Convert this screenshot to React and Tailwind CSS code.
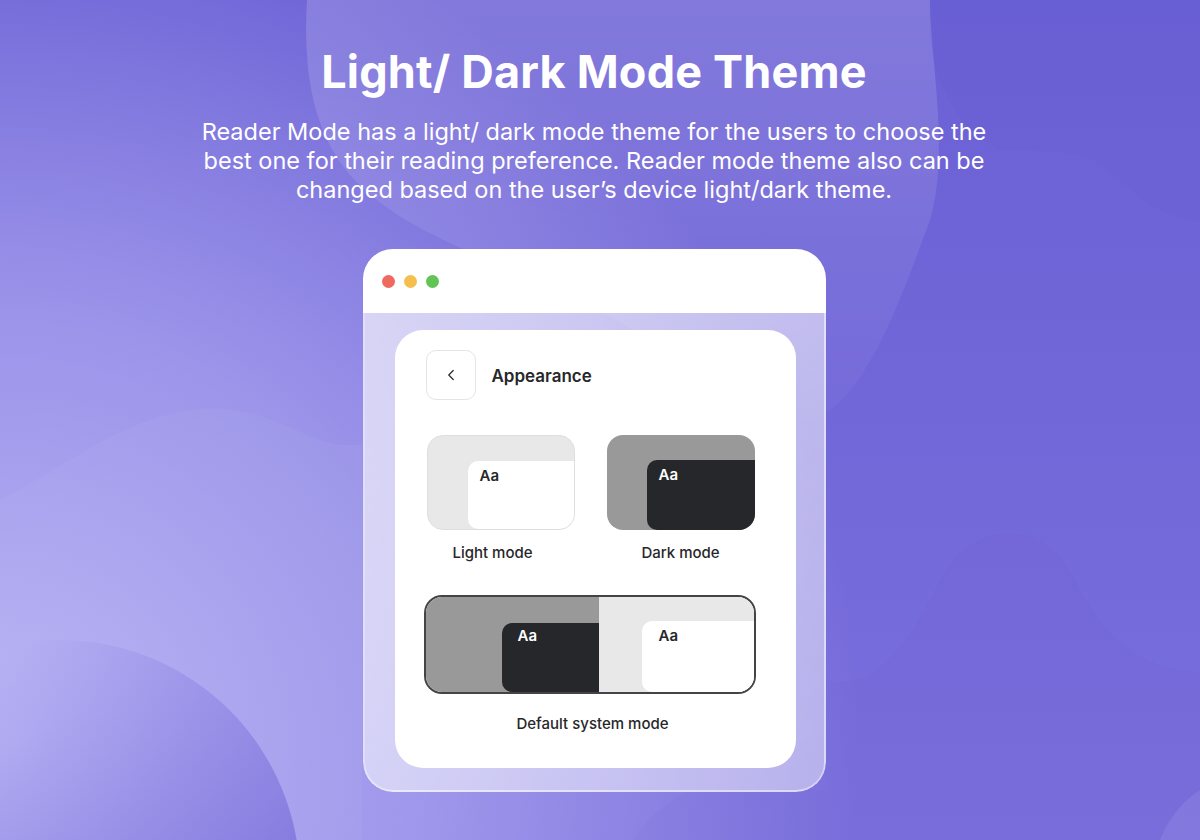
import React from "react";
import { ChevronLeft } from "lucide-react";

function Background() {
  return (
    <svg className="absolute inset-0 w-full h-full" viewBox="0 0 1200 840" preserveAspectRatio="none">
      <defs>
        <linearGradient id="base" x1="0" y1="0" x2="0" y2="1">
          <stop offset="0" stopColor="#6b60d5" />
          <stop offset="1" stopColor="#7a6fdc" />
        </linearGradient>
        <radialGradient id="glow" cx="0" cy="740" r="860" gradientUnits="userSpaceOnUse">
          <stop offset="0" stopColor="#b7b2f5" stopOpacity="1" />
          <stop offset="0.5" stopColor="#b7b2f5" stopOpacity="0.6" />
          <stop offset="1" stopColor="#b7b2f5" stopOpacity="0" />
        </radialGradient>
        <linearGradient id="topBlob" x1="0" y1="0" x2="0" y2="1">
          <stop offset="0" stopColor="#ffffff" stopOpacity="0.16" />
          <stop offset="1" stopColor="#ffffff" stopOpacity="0.02" />
        </linearGradient>
        <linearGradient id="blobBL" x1="0.25" y1="0.15" x2="0.9" y2="0.9">
          <stop offset="0" stopColor="#6f63d6" stopOpacity="0" />
          <stop offset="1" stopColor="#6f63d6" stopOpacity="1" />
        </linearGradient>
      </defs>
      <rect width="1200" height="840" fill="url(#base)" />
      <rect width="1200" height="840" fill="url(#glow)" />
      {/* top centre light blob */}
      <path
        d="M307,0 C303,70 312,130 350,175 C400,230 470,250 560,290 L800,420 C860,420 900,300 930,220 C950,150 930,60 930,0 Z"
        fill="url(#topBlob)"
      />
      {/* top right darker wave */}
      <path
        d="M930,0 C925,60 945,120 1000,150 C1050,150 1090,148 1120,180 C1150,210 1180,220 1200,222 L1200,0 Z"
        fill="#5b4fcc"
        opacity="0.07"
      />
      {/* left wave */}
      <path
        d="M0,500 C60,470 120,420 190,410 C260,400 300,440 340,445 L362,445 L362,840 L0,840 Z"
        fill="#ffffff"
        opacity="0.04"
      />
      {/* right wave */}
      <path
        d="M825,680 C870,690 900,660 940,580 C970,520 1040,520 1070,570 C1100,630 1130,668 1200,672 L1200,840 L825,840 Z"
        fill="#5b4fcc"
        opacity="0.04"
      />
      {/* bottom left circle */}
      <circle cx="60" cy="880" r="240" fill="url(#blobBL)" opacity="0.85" />
      {/* bottom right */}
      <path d="M1160,840 C1170,815 1185,800 1200,790 L1200,840 Z" fill="#ffffff" opacity="0.08" />
      {/* bottom middle */}
      <path d="M633,840 C650,815 670,800 690,790 L825,790 L825,840 Z" fill="#5b4fcc" opacity="0.05" />
    </svg>
  );
}

function ModeCard({ outer, inner, text, bordered }) {
  return (
    <div
      className={`h-[95px] rounded-[16px] overflow-hidden flex flex-col ${outer} ${bordered ? "border border-[#dedede]" : ""}`}
    >
      <div className="h-[25px] shrink-0" />
      <div className="flex flex-1">
        <div className="w-[40px] shrink-0" />
        <div className={`flex-1 rounded-l-[10px] ${inner} pl-[12px] pt-[2px]`}>
          <span className={`text-[15px] font-semibold ${text}`}>Aa</span>
        </div>
      </div>
    </div>
  );
}

export default function App() {
  return (
    <div
      className="relative w-[1200px] h-[840px] overflow-hidden"
      style={{ fontFamily: "Inter, 'Noto Sans', sans-serif" }}
    >
      <Background />
      <div className="relative flex flex-col items-center pr-[12px]">
        <h1 className="mt-[44px] text-[45px] leading-[56px] font-bold text-white tracking-[0.2px]">
          Light/ Dark Mode Theme
        </h1>
        <p className="mt-[17px] text-center text-[23.5px] leading-[29px] text-white">
          Reader Mode has a light/ dark mode theme for the users to choose the
          <br />
          best one for their reading preference. Reader mode theme also can be
          <br />
          changed based on the user’s device light/dark theme.
        </p>

        {/* browser window */}
        <div className="mt-[45px] w-[463px] rounded-[30px] overflow-hidden">
          <div className="h-[64px] bg-white flex items-center gap-[9px] pl-[19px]">
            <span className="w-[13px] h-[13px] rounded-full bg-[#ee6a5f]" />
            <span className="w-[13px] h-[13px] rounded-full bg-[#f5bf4f]" />
            <span className="w-[13px] h-[13px] rounded-full bg-[#61c454]" />
          </div>
          <div className="bg-gradient-to-br from-white/65 to-white/45 border-2 border-t-0 border-white/40 rounded-b-[30px] pl-[30px] pr-[28px] pt-[17px] pb-[22px]">
            <div className="bg-white rounded-[28px] pl-[29px] pr-[40px] pt-[20px] pb-[33px]">
              {/* header */}
              <div className="flex items-center gap-[16px] pl-[2px]">
                <div className="w-[50px] h-[50px] rounded-[10px] border border-[#e4e4e7] flex items-center justify-center">
                  <ChevronLeft size={18} strokeWidth={1.6} className="text-[#27272a]" />
                </div>
                <span className="mt-[3px] text-[17px] font-semibold text-[#27272a]">Appearance</span>
              </div>

              {/* light / dark */}
              <div className="mt-[35px] grid grid-cols-[148px_148px] gap-x-[32px] pl-[3px]">
                <ModeCard outer="bg-[#e8e8e8]" inner="bg-white" text="text-[#27272a]" bordered />
                <ModeCard outer="bg-[#999999]" inner="bg-[#26272b]" text="text-white" />
                <div className="mt-[12px] pr-[16px] text-center text-[15px] font-medium text-[#27272a]">Light mode</div>
                <div className="mt-[12px] text-center text-[15px] font-medium text-[#27272a]">Dark mode</div>
              </div>

              {/* system */}
              <div className="mt-[30px] h-[99px] rounded-[18px] border-[2.5px] border-[#444446] overflow-hidden flex">
                <div className="w-[173px] bg-[#999999] flex flex-col">
                  <div className="h-[26px] shrink-0" />
                  <div className="flex flex-1">
                    <div className="w-[76px] shrink-0" />
                    <div className="flex-1 bg-[#26272b] rounded-l-[10px] pl-[16px]">
                      <span className="text-[15px] font-semibold text-white">Aa</span>
                    </div>
                  </div>
                </div>
                <div className="flex-1 bg-[#e8e8e8] flex flex-col">
                  <div className="h-[24px] shrink-0" />
                  <div className="flex flex-1">
                    <div className="w-[43px] shrink-0" />
                    <div className="flex-1 bg-white rounded-l-[10px] pl-[17px] pt-[2px]">
                      <span className="text-[15px] font-semibold text-[#27272a]">Aa</span>
                    </div>
                  </div>
                </div>
              </div>
              <div className="mt-[19px] pl-[6px] text-center text-[15px] font-medium text-[#27272a]">Default system mode</div>
            </div>
          </div>
        </div>
      </div>
    </div>
  );
}
